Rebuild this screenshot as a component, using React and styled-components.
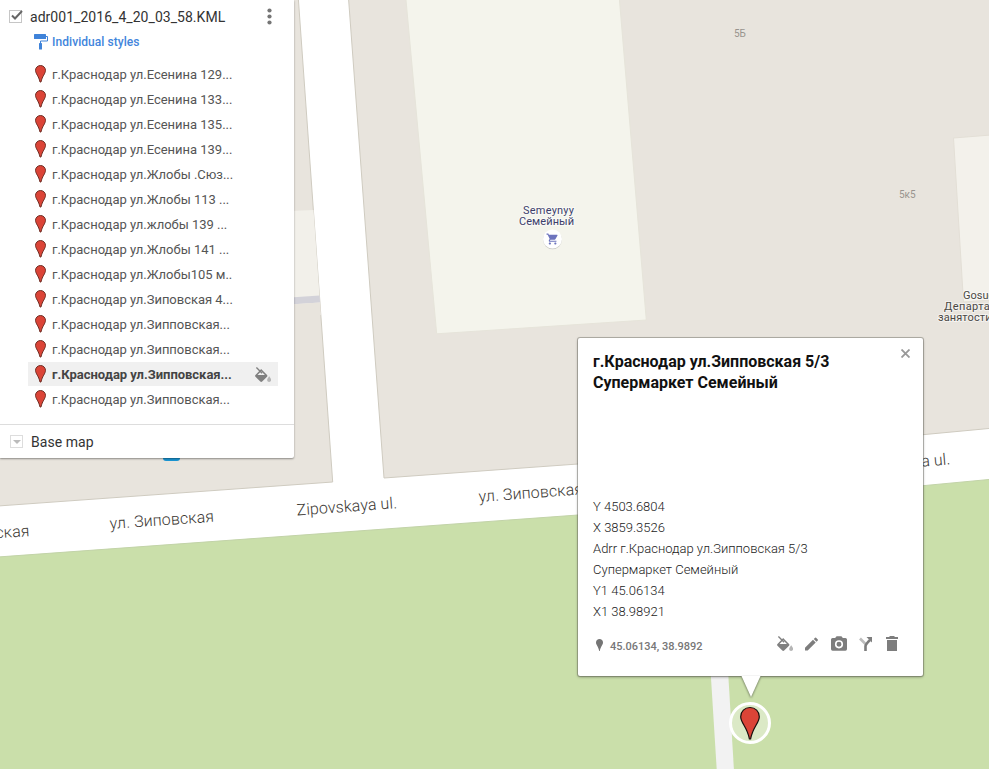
import React from 'react';
import styled, { createGlobalStyle } from 'styled-components';

const GlobalStyle = createGlobalStyle`
  body {
    margin: 0;
    overflow: hidden;
    font-family: Roboto, "Noto Sans", sans-serif;
  }
`;

const Page = styled.div`
  position: relative;
  width: 989px;
  height: 769px;
  overflow: hidden;
  background: #fff;
`;

const MapCanvas = styled.svg`
  display: block;
`;

const RoadName = styled.text`
  font-family: Roboto, sans-serif;
  font-size: 16px;
  font-weight: 300;
  fill: #3c3934;
`;

const HouseNumber = styled.text`
  font-family: Roboto, sans-serif;
  font-size: 10px;
  fill: #98948e;
`;

const PlaceName = styled.text`
  font-family: Roboto, sans-serif;
  font-size: 11px;
  letter-spacing: ${props => props.$spacing || 'normal'};
  fill: ${props => props.$color};
  stroke: #fff;
  stroke-opacity: 0.5;
  stroke-width: 2px;
  paint-order: stroke;
`;

const Panel = styled.aside`
  position: absolute;
  top: 0;
  left: 0;
  width: 294px;
  height: 458px;
  display: flex;
  flex-direction: column;
  background: #fff;
  border-radius: 0 0 2px 0;
  box-shadow: 0 1px 2px rgba(0, 0, 0, 0.4);
`;

const LayerHeader = styled.header`
  display: flex;
  align-items: center;
  height: 32px;
  padding: 0 20px 0 9px;
`;

const LayerTitle = styled.h2`
  flex: 1;
  margin: 1px 0 0 7px;
  font-size: 14px;
  font-weight: 400;
  letter-spacing: 0.04px;
  color: #333;
`;

const StyleLink = styled.div`
  display: flex;
  align-items: center;
  gap: 4px;
  height: 19px;
  padding-left: 34px;
  font-size: 12px;
  font-weight: 500;
  letter-spacing: 0.06px;
  color: #4285dc;
`;

const List = styled.ul`
  display: flex;
  flex-direction: column;
  gap: 1px;
  margin: 11px 16px 0 28px;
  padding: 0;
  list-style: none;
`;

const Item = styled.li`
  display: flex;
  align-items: center;
  height: 24px;
  padding: 0 7px;
  font-size: 13px;
  font-weight: ${props => (props.$selected ? 700 : 400)};
  letter-spacing: -0.02px;
  color: ${props => (props.$selected ? '#444' : '#555')};
  background: ${props => (props.$selected ? '#f0f0f0' : 'transparent')};
`;

const ItemName = styled.span`
  flex: 1;
  margin: 1px 0 0 6px;
  white-space: nowrap;
`;

const BaseMap = styled.div`
  display: flex;
  align-items: center;
  gap: 8px;
  height: 33px;
  margin-top: auto;
  padding-left: 10px;
  border-top: 1px solid #ddd;
  font-size: 14px;
  letter-spacing: 0.04px;
  color: #333;
`;

const Toggle = styled.span`
  display: flex;
  align-items: center;
  justify-content: center;
  box-sizing: border-box;
  width: 13px;
  height: 13px;
  border: 1px solid #ddd;
`;

const Handle = styled.div`
  position: absolute;
  top: 458px;
  left: 163px;
  width: 17px;
  height: 3px;
  border-radius: 0 0 3px 3px;
  background: #1a96d5;
`;

const Popup = styled.section`
  position: absolute;
  top: 338px;
  left: 578px;
  box-sizing: border-box;
  width: 345px;
  height: 338px;
  display: flex;
  flex-direction: column;
  padding: 13px 15px 0;
  background: #fff;
  border-radius: 2px;
  box-shadow: 0 0 0 1px rgba(100, 100, 90, 0.4), 0 1px 3px rgba(0, 0, 0, 0.4);
`;

const PopupHeader = styled.header`
  display: flex;
  justify-content: space-between;
  height: 145px;
`;

const PopupTitle = styled.h3`
  margin: 0;
  font-size: 16px;
  font-weight: 700;
  line-height: 21px;
  color: #111;
`;

const Details = styled.div`
  display: flex;
  flex-direction: column;
  font-size: 13px;
  font-weight: 300;
  line-height: 21px;
  color: #222;
`;

const PopupFooter = styled.footer`
  display: flex;
  align-items: center;
  margin-top: 12px;
  height: 22px;
`;

const Coordinates = styled.span`
  flex: 1;
  margin: 2px 0 0 4px;
  font-size: 11px;
  font-weight: 500;
  color: #777;
`;

const Tools = styled.div`
  display: flex;
  align-items: center;
  margin: -3px 10px 0 0;
`;

const Tool = styled.span`
  display: flex;
  margin-left: ${props => props.$gap}px;
`;

const PopupTail = styled.svg`
  position: absolute;
  top: 676px;
  left: 738px;
  filter: drop-shadow(0 1px 1px rgba(0, 0, 0, 0.5));
`;

const Marker = styled.svg`
  position: absolute;
  top: 701px;
  left: 728px;
`;

const CloseIcon = styled.svg`
  margin: -2px -2px 0 0;
`;

const points = [
  { name: 'г.Краснодар ул.Есенина 129...' },
  { name: 'г.Краснодар ул.Есенина 133...' },
  { name: 'г.Краснодар ул.Есенина 135...' },
  { name: 'г.Краснодар ул.Есенина 139...' },
  { name: 'г.Краснодар ул.Жлобы .Сюз...' },
  { name: 'г.Краснодар ул.Жлобы 113 ...' },
  { name: 'г.Краснодар ул.жлобы 139 ...' },
  { name: 'г.Краснодар ул.Жлобы 141 ...' },
  { name: 'г.Краснодар ул.Жлобы105 м..' },
  { name: 'г.Краснодар ул.Зиповская 4...' },
  { name: 'г.Краснодар ул.Зипповская...' },
  { name: 'г.Краснодар ул.Зипповская...' },
  { name: 'г.Краснодар ул.Зипповская...', selected: true },
  { name: 'г.Краснодар ул.Зипповская...' },
];

const details = [
  'Y 4503.6804',
  'X 3859.3526',
  'Adrr г.Краснодар ул.Зипповская 5/3',
  'Супермаркет Семейный',
  'Y1 45.06134',
  'X1 38.98921',
];

const PinIcon = () =>
  <svg width="11" height="18" viewBox="0 0 11 18">
    <path
      d="M5.5.5C2.7.5.5 2.7.5 5.4c0 3.1 3.3 5.7 4.5 11.6h1c1.200-5.900 4.500-8.500 4.500-11.600C10.500 2.700 8.300.5 5.500.5z"
      fill="#db4437"
      stroke="#6e2f25"
      strokeWidth="1"
    />
  </svg>;

const BucketIcon = () =>
  <svg width="16" height="15" viewBox="3 0 18 17">
    <path
      fill="#808080"
      d="M16.560 8.940L9.900 2.280 8.600 3.800l-5.150 5.140c-.59.59-.59 1.540 0 2.120l5.500 5.500c.29.290.68.440 1.060.440s.77-.15 1.060-.44l5.500-5.500c.59-.58.59-1.530 0-2.120zM5.800 9L10 4.800 14.200 9z"
    />
    <path d="M4.500.5L11 7" stroke="#808080" strokeWidth="1.500" />
    <path fill="#b5b5b5" d="M19 10.500s-2.300 2.800-2.300 4.200c0 1.200 1 2.300 2.300 2.300s2.300-1.100 2.300-2.300c0-1.400-2.300-4.200-2.300-4.200z" />
  </svg>;

const Checkbox = () =>
  <svg width="14" height="14" viewBox="0 0 14 14">
    <rect x=".5" y="1.500" width="12" height="12" fill="#fff" stroke="#c6c6c6" />
    <path d="M3 6.500L6 9.500 13 2" fill="none" stroke="#666" strokeWidth="2" />
  </svg>;

const Map = () =>
  <MapCanvas width="989" height="769" viewBox="0 0 989 769">
    <g fill="#e8e4dd" stroke="#cfcbc0" strokeWidth="1">
      <path d="M-2-2H298.300L332.700 482-2 506z" />
      <path d="M348.500-2L384 478 578 464 923 434.700 991 428.300V-2z" />
    </g>
    <path d="M290 211L313.500 210 320 303 290 305z" fill="#f2f0ea" />
    <path d="M290 297.500L319.600 295.500 320.100 302.500 290 304.500z" fill="#d3d2d9" />
    <path d="M290 304.500L320.100 302.500 321 315 290 315z" fill="#e8e4dd" />
    <path d="M405.800-2L436.700 333.800 646.300 320 619.300-2z" fill="#f4f4ec" stroke="#e6e4da" />
    <path d="M953.500 138L991 135V300L963.500 302z" fill="#f3f1eb" stroke="#e3dfd6" />
    <path d="M-2 557L340 532.300 578 515 923 485.700 991 479.300V771H-2z" fill="#cadfaa" stroke="#c2d3a8" />
    <path d="M710.500 670L716.800 771H734L728 670z" fill="#f2f2f2" />

    <RoadName x="-74" y="543" textLength="104" transform="rotate(-3.800 -74 543)">ул. Зиповская</RoadName>
    <RoadName x="110" y="529" textLength="104.500" transform="rotate(-4 110 529)">ул. Зиповская</RoadName>
    <RoadName x="297" y="515.500" textLength="100.500" transform="rotate(-4.200 297 515.500)">Zipovskaya ul.</RoadName>
    <RoadName x="479" y="502" textLength="104.500" transform="rotate(-4.200 479 502)">ул. Зиповская</RoadName>
    <RoadName x="850.500" y="473" textLength="100.500" transform="rotate(-5 850.500 473)">Zipovskaya ul.</RoadName>

    <HouseNumber x="734" y="36.500">5Б</HouseNumber>
    <HouseNumber x="899" y="197.500">5к5</HouseNumber>
    <PlaceName x="523" y="213.500" textLength="51" $color="#3d3f6b">Semeynyy</PlaceName>
    <PlaceName x="519" y="224.500" textLength="55" $color="#3d3f6b">Семейный</PlaceName>
    <PlaceName x="963" y="299" $color="#4a4844">Gosudarstvennoye</PlaceName>
    <PlaceName x="944" y="310" $color="#4a4844" $spacing="0.4px">Департамент</PlaceName>
    <PlaceName x="938" y="321" $color="#4a4844" $spacing="0.1px">занятости</PlaceName>

    <circle cx="552.500" cy="239.700" r="9.500" fill="#c9c9c4" />
    <circle cx="552.500" cy="239" r="9.500" fill="#fff" />
    <path
      transform="translate(546 232.500) scale(.55)"
      fill="#6d74bd"
      d="M7 18c-1.100 0-1.990.9-1.990 2S5.900 22 7 22s2-.9 2-2-.9-2-2-2zM1 2v2h2l3.600 7.590-1.350 2.450c-.16.280-.25.610-.25.960 0 1.100.9 2 2 2h12v-2H7.420c-.14 0-.25-.11-.25-.25l.03-.12.900-1.630h7.450c.75 0 1.410-.41 1.750-1.030l3.580-6.490A1 1 0 0 0 20 4H5.210l-.94-2H1zm16 16c-1.100 0-1.990.9-1.990 2s.89 2 1.990 2 2-.9 2-2-.9-2-2-2z"
    />
  </MapCanvas>;

const LayerPanel = () =>
  <Panel>
    <LayerHeader>
      <Checkbox />
      <LayerTitle>adr001_2016_4_20_03_58.KML</LayerTitle>
      <svg width="10" height="18" viewBox="0 0 10 18" fill="#757575">
        <circle cx="5.500" cy="3.500" r="2.100" />
        <circle cx="5.500" cy="9.500" r="2.100" />
        <circle cx="5.500" cy="15.500" r="2.100" />
      </svg>
    </LayerHeader>
    <StyleLink>
      <svg width="14" height="16" viewBox="0 0 14 16">
        <rect width="12" height="5" rx=".6" fill="#3f83d9" />
        <path d="M12 2.500h1.500V7h-7v3" fill="none" stroke="#3f83d9" />
        <rect x="5" y="9" width="3" height="6.500" rx=".6" fill="#3f83d9" />
      </svg>
      Individual styles
    </StyleLink>
    <List>
      {points.map((point, i) =>
        <Item key={i} $selected={point.selected}>
          <PinIcon />
          <ItemName>{point.name}</ItemName>
          {point.selected && <BucketIcon />}
        </Item>
      )}
    </List>
    <BaseMap>
      <Toggle>
        <svg width="8" height="4" viewBox="0 0 8 4"><path d="M0 0h8L4 4z" fill="#bbb" /></svg>
      </Toggle>
      Base map
    </BaseMap>
  </Panel>;

const InfoPopup = () =>
  <Popup>
    <PopupHeader>
      <PopupTitle>г.Краснодар ул.Зипповская 5/3<br />Супермаркет Семейный</PopupTitle>
      <CloseIcon width="9" height="9" viewBox="0 0 9 9">
        <path d="M.5.5l8 8M8.500.5l-8 8" stroke="#999" strokeWidth="1.800" />
      </CloseIcon>
    </PopupHeader>
    <Details>
      {details.map(line => <span key={line}>{line}</span>)}
    </Details>
    <PopupFooter>
      <svg width="13" height="12" viewBox="0 0 13 12">
        <path d="M6.500 0C4.500 0 3 1.500 3 3.500 3 6 5.500 7.500 6.200 12h.6C7.500 7.500 10 6 10 3.500 10 1.500 8.500 0 6.500 0z" fill="#757575" />
      </svg>
      <Coordinates>45.06134, 38.9892</Coordinates>
      <Tools>
        <Tool><BucketIcon /></Tool>
        <Tool $gap={12}>
          <svg width="13" height="14" viewBox="3 3 18 18" fill="#7d7d7d">
            <path d="M3 17.250V21h3.750L17.810 9.940l-3.750-3.750L3 17.250zM20.710 7.040a1 1 0 0 0 0-1.410l-2.340-2.340a1 1 0 0 0-1.410 0l-1.830 1.830 3.750 3.750 1.830-1.830z" />
          </svg>
        </Tool>
        <Tool $gap={13}>
          <svg width="16" height="15" viewBox="2 2 20 18">
            <path d="M9 2L7.170 4H4a2 2 0 0 0-2 2v12a2 2 0 0 0 2 2h16a2 2 0 0 0 2-2V6a2 2 0 0 0-2-2h-3.170L15 2z" fill="#7d7d7d" />
            <circle cx="12" cy="12" r="4.100" fill="#7d7d7d" stroke="#fff" strokeWidth="2" />
          </svg>
        </Tool>
        <Tool $gap={12}>
          <svg width="14" height="14" viewBox="0 0 14 14" fill="none" strokeWidth="2.600">
            <path d="M1 1.500L6.500 7" stroke="#bdbdbd" />
            <path d="M6.500 14V9Q6.500 7.500 11 3" stroke="#7d7d7d" />
            <path d="M7.500 0H13v5.500z" fill="#7d7d7d" />
          </svg>
        </Tool>
        <Tool $gap={13}>
          <svg width="12" height="15" viewBox="0 0 12 15" fill="#7d7d7d">
            <path d="M0 1h3.500V0h5v1H12v2H0zM1 4h10v11H1z" />
          </svg>
        </Tool>
      </Tools>
    </PopupFooter>
  </Popup>;

const App = () =>
  <Page>
    <GlobalStyle />
    <Map />
    <Handle />
    <LayerPanel />
    <InfoPopup />
    <PopupTail width="26" height="24" viewBox="0 0 26 24">
      <path d="M3.500 0L13 21 22.500 0z" fill="#fff" />
    </PopupTail>
    <Marker width="44" height="44" viewBox="0 0 44 44">
      <circle cx="22" cy="22" r="19.500" fill="#dbe9c6" stroke="#fff" strokeWidth="3" />
      <path
        d="M22 6.500c-5.300 0-9.300 4-9.300 9.200 0 6.300 6.600 10.300 8.700 22.300h1.200c2.100-12 8.700-16 8.700-22.300 0-5.200-4-9.200-9.300-9.200z"
        fill="#db4437"
        stroke="#16100e"
        strokeWidth="1.200"
      />
    </Marker>
  </Page>;

export default App;
